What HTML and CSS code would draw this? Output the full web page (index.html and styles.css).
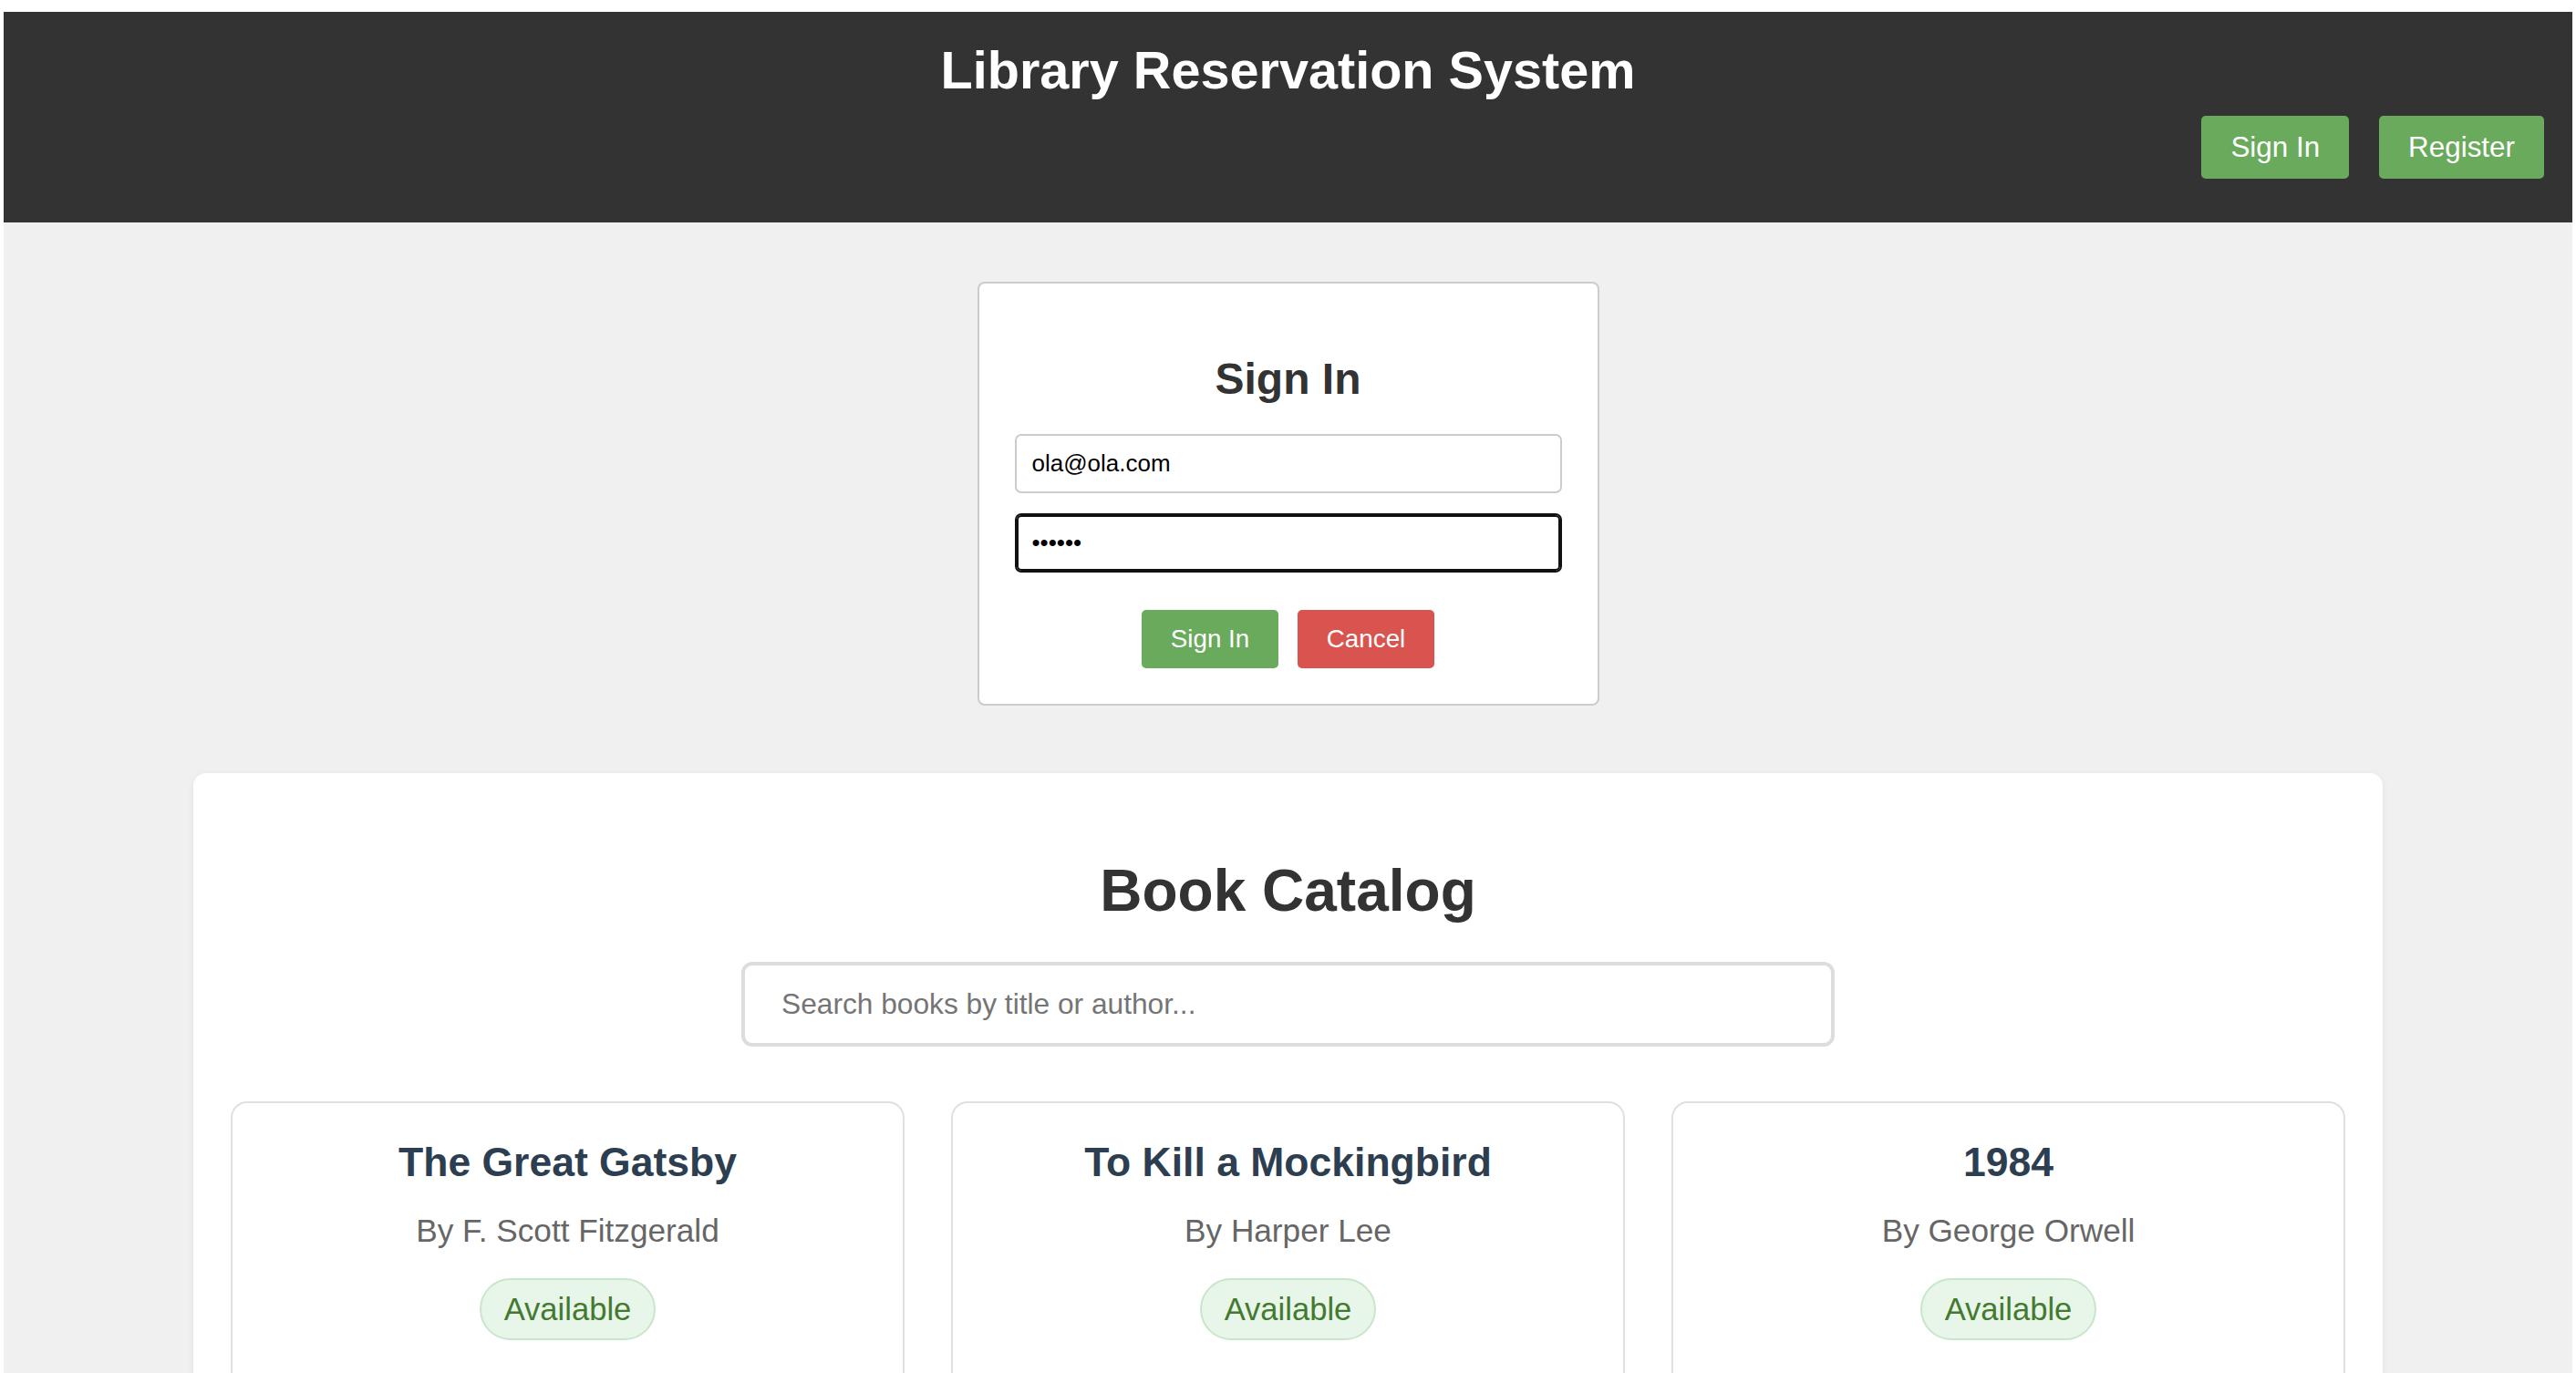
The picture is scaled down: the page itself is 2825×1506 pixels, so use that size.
FILE: index.html
```html
<!DOCTYPE html>
<html lang="en">
<head>
<meta charset="utf-8">
<title>Library Reservation System</title>
<link rel="stylesheet" href="styles.css">
</head>
<body>
<div class="app">
  <header class="topbar">
    <h1 class="brand">Library Reservation System</h1>
    <nav class="nav">
      <button class="btn btn-green nav-btn">Sign In</button>
      <button class="btn btn-green nav-btn">Register</button>
    </nav>
  </header>
  <main class="main">
    <section class="signin-card">
      <h2 class="signin-title">Sign In</h2>
      <input class="field field-email" type="email" value="ola@ola.com">
      <input class="field field-focus" type="password" value="123456">
      <div class="form-actions">
        <button class="btn btn-green form-btn">Sign In</button>
        <button class="btn btn-red form-btn">Cancel</button>
      </div>
    </section>
    <section class="catalog">
      <h2 class="catalog-title">Book Catalog</h2>
      <input class="search" type="text" placeholder="Search books by title or author...">
      <div class="book-grid">
        <article class="book-card">
          <h3 class="book-title">The Great Gatsby</h3>
          <p class="book-author">By F. Scott Fitzgerald</p>
          <span class="badge">Available</span>
        </article>
        <article class="book-card">
          <h3 class="book-title">To Kill a Mockingbird</h3>
          <p class="book-author">By Harper Lee</p>
          <span class="badge">Available</span>
        </article>
        <article class="book-card">
          <h3 class="book-title">1984</h3>
          <p class="book-author">By George Orwell</p>
          <span class="badge">Available</span>
        </article>
      </div>
    </section>
  </main>
</div>
</body>
</html>
```
FILE: styles.css
```css
* {
  box-sizing: border-box;
}

html {
  background: #ffffff;
}

body {
  margin: 13px 4px 0;
  font-family: "Liberation Sans", Arial, Helvetica, sans-serif;
}

.app {
  background: #f0f0f0;
  min-height: 1700px;
}

.topbar {
  background: #333333;
  color: #ffffff;
  padding: 32px 31px 48px;
}

.brand {
  margin: 0;
  font-size: 57.6px;
  line-height: 64px;
  font-weight: bold;
  text-align: center;
}

.nav {
  display: flex;
  justify-content: flex-end;
  gap: 33px;
  margin-top: 18px;
}

.btn {
  border: none;
  color: #ffffff;
  font-family: "Liberation Sans", Arial, Helvetica, sans-serif;
  cursor: pointer;
  display: inline-flex;
  align-items: center;
  justify-content: center;
}

.btn-green {
  background: #6aaa5c;
}

.btn-red {
  background: #d9534f;
}

.nav-btn {
  height: 69px;
  padding: 0 32px;
  font-size: 31.4px;
  border-radius: 5px;
}

.main {
  display: flex;
  flex-direction: column;
  align-items: center;
  padding-top: 65px;
}

.signin-card {
  width: 682px;
  background: #ffffff;
  border: 2px solid #cccccc;
  border-radius: 8px;
  padding: 39px;
  margin-bottom: 74px;
}

.signin-title {
  margin: 38px 0 32px;
  font-size: 48px;
  line-height: 56px;
  font-weight: bold;
  text-align: center;
  color: #333333;
}

.field {
  display: block;
  width: 100%;
  height: 65px;
  border: 2px solid #cccccc;
  border-radius: 7px;
  padding: 0 17px;
  font-family: "Liberation Sans", Arial, Helvetica, sans-serif;
  font-size: 26px;
  color: #000000;
  background: #ffffff;
  outline: none;
}

.field-email {
  margin-bottom: 22px;
}

.field-focus {
  border-color: #111111;
  box-shadow: inset 0 0 0 2px #111111;
}

.form-actions {
  display: flex;
  justify-content: center;
  gap: 21px;
  margin-top: 41px;
}

.form-btn {
  width: 150px;
  height: 64px;
  font-size: 27.8px;
  border-radius: 5px;
}

.catalog {
  width: 2401px;
  background: #ffffff;
  border-radius: 14px;
  padding: 41px;
  box-shadow: 0 2px 8px rgba(0, 0, 0, 0.06);
}

.catalog-title {
  margin: 52px 0 42px;
  font-size: 64px;
  line-height: 72px;
  font-weight: bold;
  text-align: center;
  color: #333333;
}

.search {
  display: block;
  width: 1199px;
  height: 93px;
  margin: 0 auto 60px;
  border: 4px solid #dddddd;
  border-radius: 12px;
  padding: 0 40px;
  font-family: "Liberation Sans", Arial, Helvetica, sans-serif;
  font-size: 31.7px;
  color: #333333;
  outline: none;
}

.search::placeholder {
  color: #757575;
}

.book-grid {
  display: grid;
  grid-template-columns: repeat(3, 1fr);
  gap: 51px;
}

.book-card {
  background: #ffffff;
  border: 2px solid #e0e0e0;
  border-radius: 18px;
  padding: 40px 30px 60px;
  text-align: center;
}

.book-title {
  margin: 0;
  font-size: 44.5px;
  line-height: 50px;
  font-weight: bold;
  color: #2c3e50;
}

.book-author {
  margin: 30px 0 32px;
  font-size: 35.2px;
  line-height: 40px;
  color: #666666;
}

.badge {
  display: inline-block;
  padding: 12px 25px;
  border: 2px solid #c8e6c9;
  background: #e8f5e9;
  color: #447a30;
  border-radius: 40px;
  font-size: 34.6px;
  line-height: 40px;
}
```
